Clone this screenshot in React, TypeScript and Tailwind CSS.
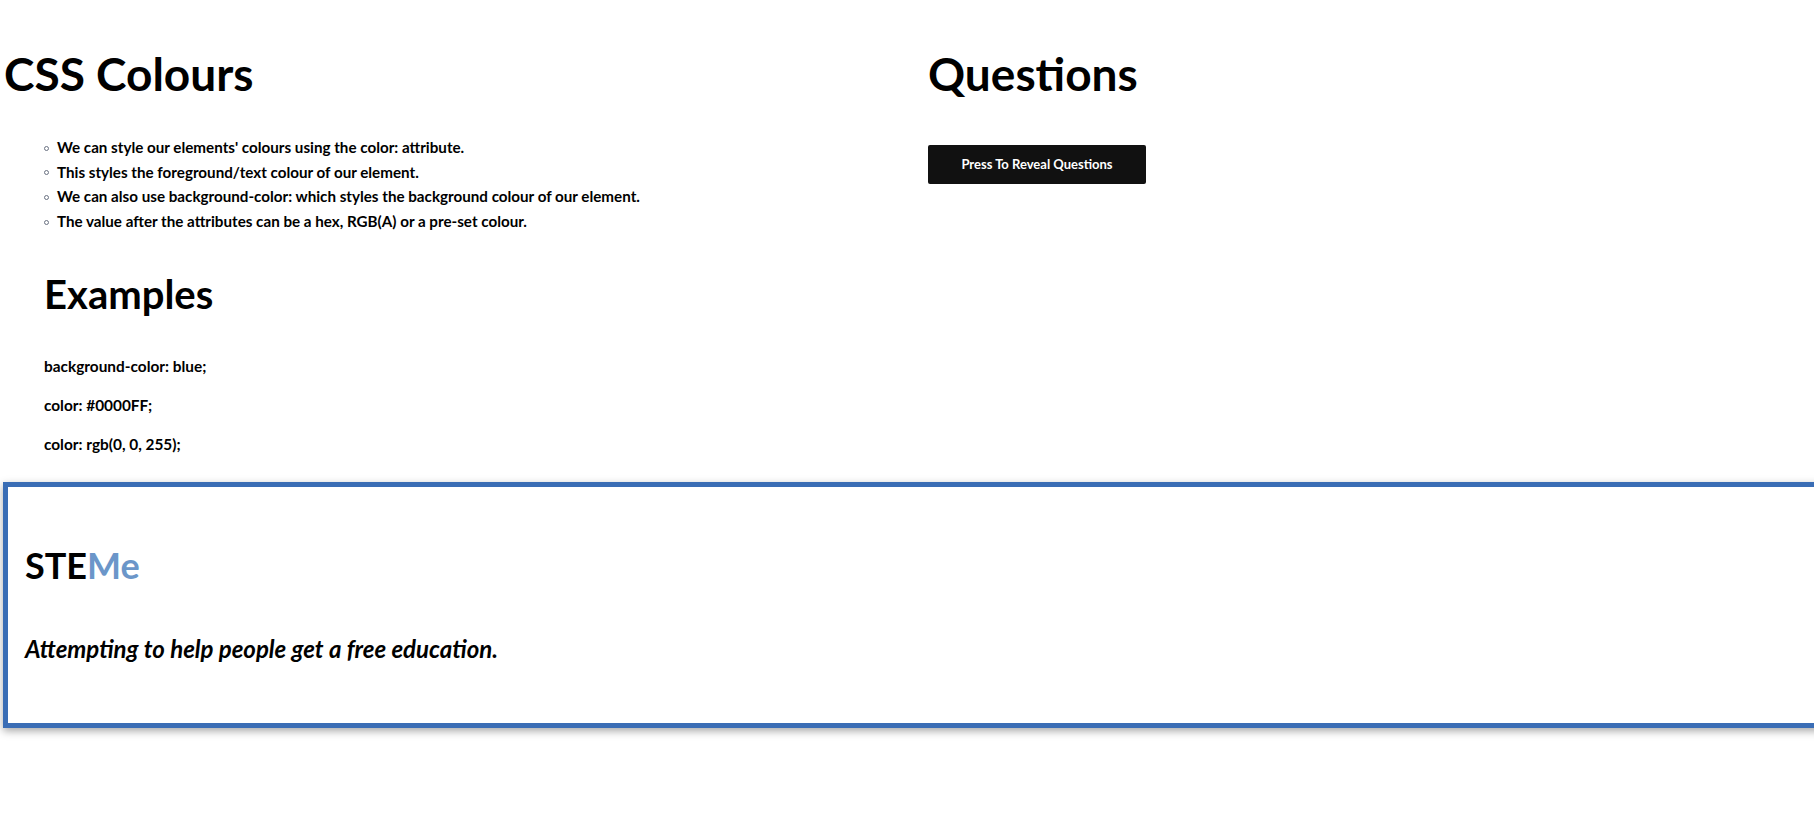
const points = [
  "We can style our elements' colours using the color: attribute.",
  "This styles the foreground/text colour of our element.",
  "We can also use background-color: which styles the background colour of our element.",
  "The value after the attributes can be a hex, RGB(A) or a pre-set colour.",
];

const examples = ["background-color: blue;", "color: #0000FF;", "color: rgb(0, 0, 255);"];

export default function App() {
  return (
    <div className="min-h-screen w-full overflow-hidden bg-white text-black font-['Lato','Noto_Sans',sans-serif] font-bold">
      <div className="flex pl-[3px] pt-[47px]">
        {/* lesson */}
        <div className="w-[925px] shrink-0">
          <h1 className="text-[46px] leading-[54px] pl-[1px]">CSS Colours</h1>
          <ul className="mt-[34px] pl-[41px] text-[15.2px] leading-[24.6px]">
            {points.map((p) => (
              <li key={p} className="flex items-center gap-[8px]">
                <span className="mt-[2px] h-[5px] w-[5px] shrink-0 rounded-full border border-gray-500" />
                <span>{p}</span>
              </li>
            ))}
          </ul>
          <div className="pl-[41px]">
            <h2 className="mt-[39px] text-[40px] leading-[44px]">Examples</h2>
            <div className="mt-[38px] flex flex-col gap-[15px] text-[15.4px] leading-[24px]">
              {examples.map((e) => (
                <p key={e}>{e}</p>
              ))}
            </div>
          </div>
        </div>

        {/* questions */}
        <div className="flex flex-col items-start">
          <h1 className="text-[46px] leading-[54px]">Questions</h1>
          <button className="mt-[44px] h-[39px] w-[218px] rounded-[2px] bg-[#111111] text-[13px] font-bold text-white">
            Press To Reveal Questions
          </button>
        </div>
      </div>

      <div className="ml-[3px] mt-[26px] w-[1840px] border-[5px] border-[#3a6db5] bg-white px-[17px] pt-[57px] pb-[60px] shadow-[0_3px_8px_rgba(0,0,0,0.35)]">
        <h2 className="text-[36px] leading-[43px]">
          STE<span className="text-[#6b96c9]">Me</span>
        </h2>
        <p className="mt-[47px] text-[24px] italic leading-[29px]">
          Attempting to help people get a free education.
        </p>
      </div>
    </div>
  );
}
